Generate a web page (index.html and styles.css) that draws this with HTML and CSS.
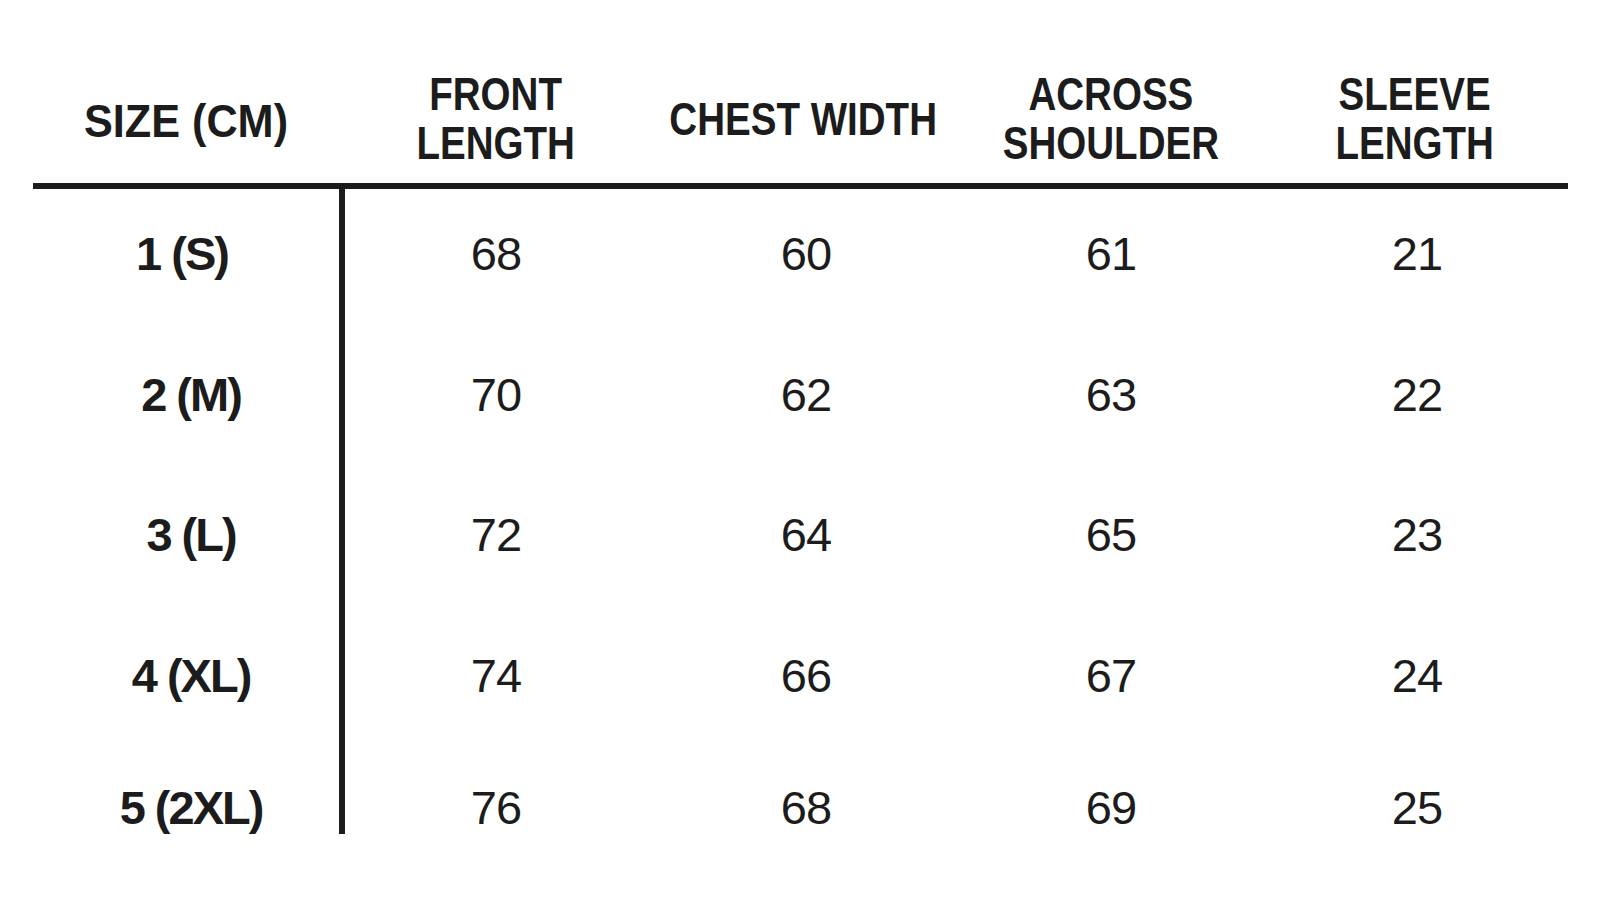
FILE: index.html
```html
<!DOCTYPE html>
<html lang="en">
<head>
<meta charset="utf-8">
<title>Size chart</title>
<link rel="stylesheet" href="styles.css">
</head>
<body>
<div class="chart">
  <div class="head">
    <div class="hcell first"><span class="htext wide">SIZE (CM)</span></div>
    <div class="hcell"><span class="htext">FRONT<br>LENGTH</span></div>
    <div class="hcell chest"><span class="htext">CHEST WIDTH</span></div>
    <div class="hcell"><span class="htext">ACROSS<br>SHOULDER</span></div>
    <div class="hcell end"><span class="htext">SLEEVE<br>LENGTH</span></div>
  </div>
  <div class="body">
    <div class="divider"></div>
    <div class="cell label first-label">1 (S)</div><div class="cell num">68</div><div class="cell num">60</div><div class="cell num">61</div><div class="cell num">21</div>
    <div class="cell label">2 (M)</div><div class="cell num">70</div><div class="cell num">62</div><div class="cell num">63</div><div class="cell num">22</div>
    <div class="cell label">3 (L)</div><div class="cell num">72</div><div class="cell num">64</div><div class="cell num">65</div><div class="cell num">23</div>
    <div class="cell label">4 (XL)</div><div class="cell num">74</div><div class="cell num">66</div><div class="cell num">67</div><div class="cell num">24</div>
    <div class="cell label last">5 (2XL)</div><div class="cell num last">76</div><div class="cell num last">68</div><div class="cell num last">69</div><div class="cell num last">25</div>
  </div>
</div>
</body>
</html>
```
FILE: styles.css
```css
html, body {
  margin: 0;
  padding: 0;
  background: #ffffff;
}

body {
  width: 1600px;
  height: 900px;
  overflow: hidden;
  color: #1c1c1c;
  font-family: "Liberation Sans", Arial, sans-serif;
}

.chart {
  padding-left: 33px;
}

.head {
  display: grid;
  grid-template-columns: 312px 302px 318px 292px 311px;
  align-items: center;
  width: 1535px;
  padding-top: 69px;
  padding-bottom: 16px;
  border-bottom: 6px solid #1c1c1c;
}

.hcell {
  display: flex;
  justify-content: center;
  align-items: center;
  text-align: center;
  white-space: nowrap;
  font-weight: bold;
  font-size: 47px;
  line-height: 49px;
}

.htext {
  display: inline-block;
  flex: none;
  transform: scaleX(0.82);
}

.htext.wide {
  transform: scaleX(0.92);
}

.hcell.first {
  padding-right: 6px;
  padding-top: 4px;
}

.hcell.chest {
  padding-right: 6px;
}

.hcell.end {
  padding-left: 5px;
}

.body {
  display: grid;
  grid-template-columns: 306px 6px 302px 318px 292px 320px;
  grid-template-rows: repeat(4, 140.5px) 83px;
}

.divider {
  grid-column: 2;
  grid-row: 1 / -1;
  background: #1c1c1c;
}

.cell {
  text-align: center;
  white-space: nowrap;
  font-size: 47px;
  line-height: 130px;
  align-self: start;
}

.cell.last {
  line-height: 114px;
}

.label {
  font-weight: bold;
  letter-spacing: -2px;
  padding-left: 10px;
}

.label.first-label {
  padding-left: 0;
  padding-right: 8px;
}

.num {
  letter-spacing: -1px;
}
```
